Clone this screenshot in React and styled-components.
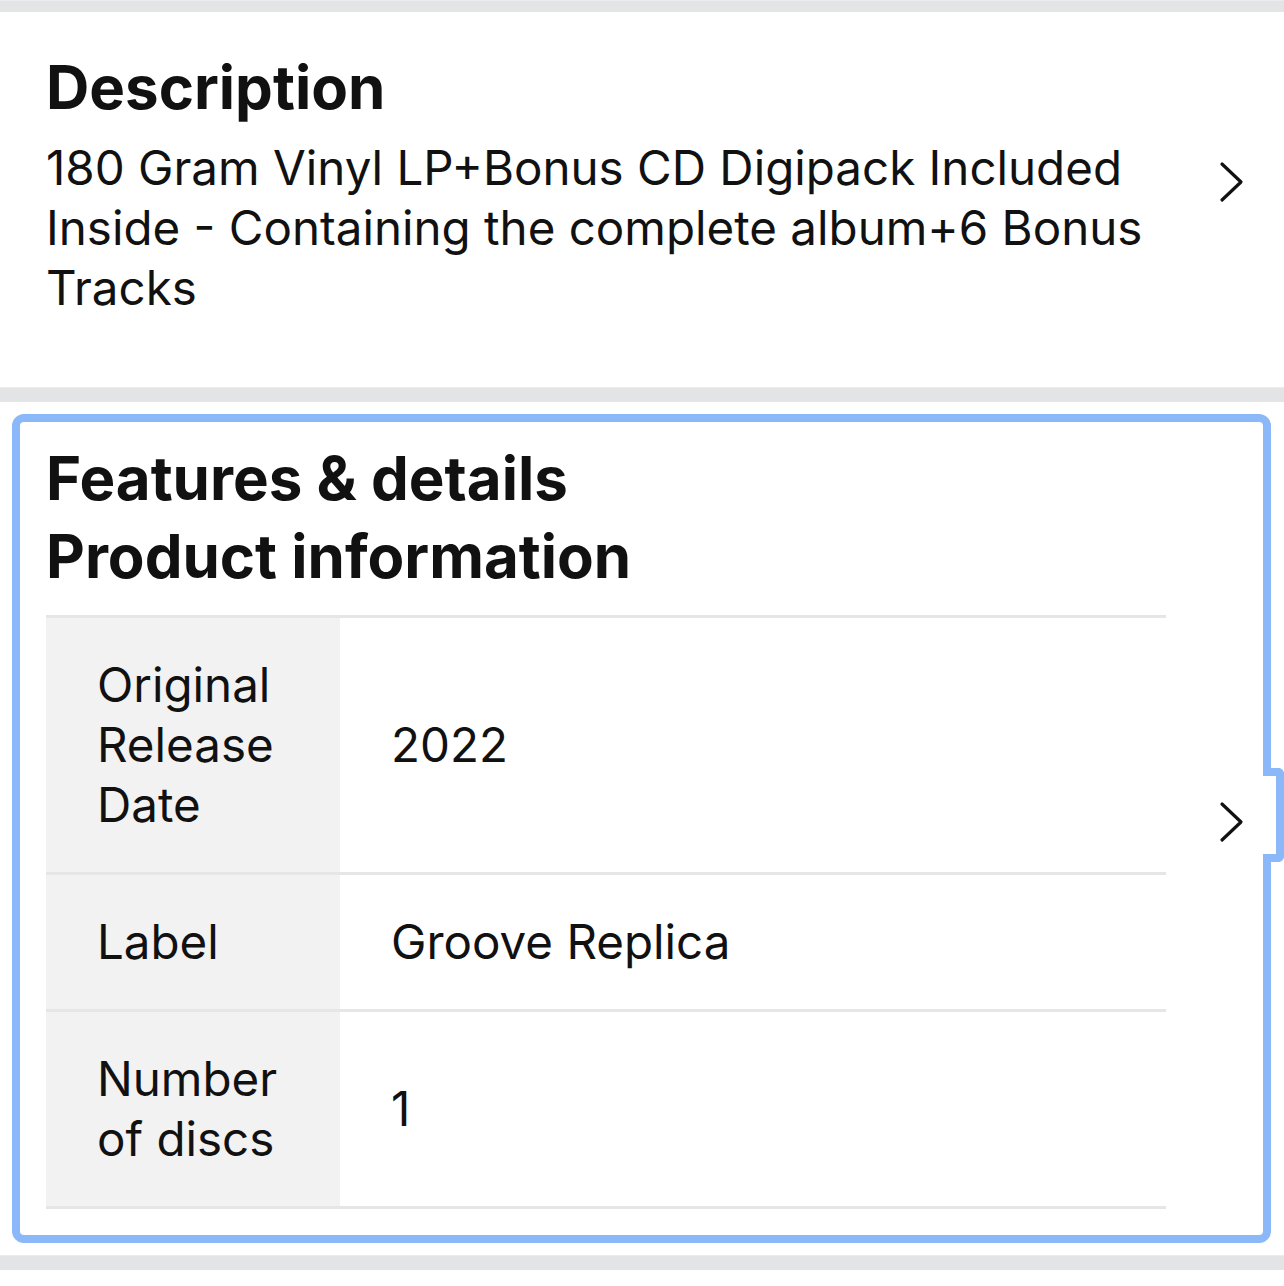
import React from "react";
import styled, { createGlobalStyle } from "styled-components";

const GlobalStyle = createGlobalStyle`
  html, body {
    margin: 0;
    padding: 0;
    background: #ffffff;
    overflow-x: hidden;
  }
  body {
    font-family: Inter, "Liberation Sans", Arial, sans-serif;
    color: #111111;
  }
`;

function Chevron() {
  return (
    <svg width="26" height="42" viewBox="0 0 26 42" fill="none">
      <polyline
        points="3,3 22,21 3,39"
        stroke="#111111"
        strokeWidth="3.2"
        strokeLinecap="round"
        strokeLinejoin="round"
      />
    </svg>
  );
}

const rows = [
  { label: "Original Release Date", value: "2022" },
  { label: "Label", value: "Groove Replica" },
  { label: "Number of discs", value: "1" },
];

function App() {
  return (
    <Page>
      <GlobalStyle />
      <Divider $height={12} />

      <DescriptionSection>
        <DescriptionBody>
          <Heading $gap={12}>Description</Heading>
          <DescriptionText>
            180 Gram Vinyl LP+Bonus CD Digipack Included Inside - Containing the
            complete album+6 Bonus Tracks
          </DescriptionText>
        </DescriptionBody>
        <ChevronBox $offset={-36}>
          <Chevron />
        </ChevronBox>
      </DescriptionSection>

      <Divider $height={15} />

      <CardWrap>
        <Card>
          <CardBody>
            <CardHeadings>
              <Heading>Features &amp; details</Heading>
              <Heading>Product information</Heading>
            </CardHeadings>
            <Table>
              {rows.map((row) => (
                <Row key={row.label}>
                  <LabelCell>{row.label}</LabelCell>
                  <ValueCell>{row.value}</ValueCell>
                </Row>
              ))}
            </Table>
          </CardBody>
          <ChevronBox $offset={6}>
            <Chevron />
          </ChevronBox>
          <FocusTab />
        </Card>
      </CardWrap>

      <Divider $height={15} />
      <Spacer />
    </Page>
  );
}

const Page = styled.div`
  width: 1284px;
  display: flex;
  flex-direction: column;
`;

const Divider = styled.div`
  height: ${(p) => p.$height}px;
  background: #e3e4e6;
  border-top: 1px solid #ececee;
  box-sizing: border-box;
`;

const DescriptionSection = styled.section`
  height: 375px;
  box-sizing: border-box;
  padding: 36px 39px 0 46px;
  display: flex;
  align-items: flex-start;
`;

const DescriptionBody = styled.div`
  width: 1120px;
  display: flex;
  flex-direction: column;
`;

const Heading = styled.h2`
  margin: 0 0 ${(p) => p.$gap || 0}px;
  font-size: 60px;
  line-height: 78px;
  font-weight: 700;
  color: #111111;
`;

const DescriptionText = styled.p`
  margin: 0;
  font-size: 47.5px;
  line-height: 60px;
  font-weight: 400;
  color: #111111;
`;

const ChevronBox = styled.div`
  flex: 1;
  align-self: center;
  display: flex;
  justify-content: flex-end;
  transform: translateY(${(p) => p.$offset}px);
`;

const CardWrap = styled.div`
  padding: 12px 13px 12px 12px;
`;

const Card = styled.div`
  position: relative;
  border: 8px solid #8ab8f8;
  border-radius: 12px;
  padding: 0 18px 26px 26px;
  display: flex;
`;

const CardBody = styled.div`
  width: 1120px;
  display: flex;
  flex-direction: column;
`;

const CardHeadings = styled.div`
  padding: 17px 0 20px;
`;

const Table = styled.div`
  border-top: 3px solid #e6e6e6;
  display: flex;
  flex-direction: column;
`;

const Row = styled.div`
  display: grid;
  grid-template-columns: 294px 1fr;
  border-bottom: 3px solid #e6e6e6;
`;

const LabelCell = styled.div`
  background: #f2f2f2;
  padding: 37px 40px 37px 51px;
  font-size: 47.5px;
  line-height: 60px;
  color: #111111;
`;

const ValueCell = styled.div`
  display: flex;
  align-items: center;
  padding: 0 40px 0 51px;
  font-size: 47.5px;
  line-height: 60px;
  color: #111111;
`;

const FocusTab = styled.div`
  position: absolute;
  top: 346px;
  right: -21px;
  width: 21px;
  height: 94px;
  box-sizing: border-box;
  background: #ffffff;
  border: 8px solid #8ab8f8;
  border-left: none;
  border-radius: 0 6px 6px 0;
`;

const Spacer = styled.div`
  height: 18px;
`;

export default App;
